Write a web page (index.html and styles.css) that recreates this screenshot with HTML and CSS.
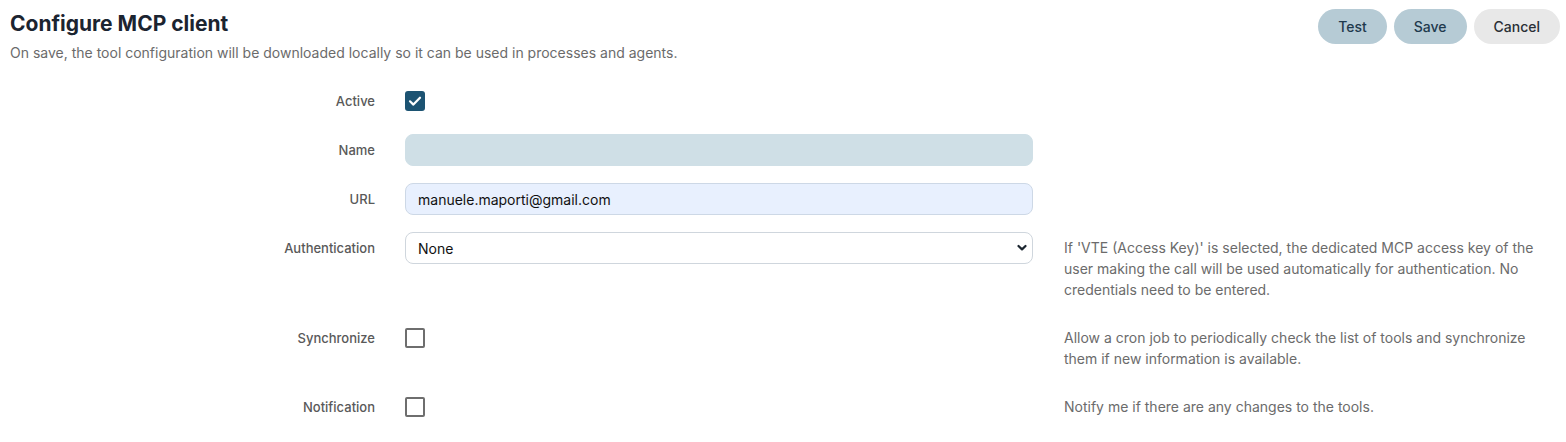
FILE: index.html
```html
<!DOCTYPE html>
<html lang="en">
<head>
<meta charset="utf-8">
<title>Configure MCP client</title>
<link rel="stylesheet" href="styles.css">
</head>
<body>
<header class="page-header">
  <div class="heading">
    <h1 class="title">Configure MCP client</h1>
    <p class="subtitle">On save, the tool configuration will be downloaded locally so it can be used in processes and agents.</p>
  </div>
  <div class="actions">
    <button class="btn btn-primary">Test</button>
    <button class="btn btn-primary">Save</button>
    <button class="btn btn-secondary">Cancel</button>
  </div>
</header>

<form class="form">
  <div class="row">
    <label class="label">Active</label>
    <div class="control">
      <span class="check checked">
        <svg viewBox="0 0 20 20" width="20" height="20"><path d="M5 10.3l3.4 3.3 6.6-6.9" fill="none" stroke="#fff" stroke-width="2.2" stroke-linecap="round" stroke-linejoin="round"/></svg>
      </span>
    </div>
  </div>

  <div class="row">
    <label class="label">Name</label>
    <div class="control">
      <input class="input input-empty" type="text" value="">
    </div>
  </div>

  <div class="row">
    <label class="label">URL</label>
    <div class="control">
      <input class="input input-filled" type="text" value="manuele.maporti@gmail.com">
    </div>
  </div>

  <div class="row">
    <label class="label">Authentication</label>
    <div class="control">
      <div class="select-wrap">
        <select class="select">
          <option>None</option>
        </select>
        <svg class="chevron" viewBox="0 0 10 8" width="10" height="8"><path d="M1.5 2l3.5 3.4 3.5-3.4" fill="none" stroke="#1c2630" stroke-width="2.2" stroke-linecap="round" stroke-linejoin="round"/></svg>
      </div>
    </div>
    <p class="help">If 'VTE (Access Key)' is selected, the dedicated MCP access key of the user making the call will be used automatically for authentication. No credentials need to be entered.</p>
  </div>

  <div class="row">
    <label class="label">Synchronize</label>
    <div class="control">
      <span class="check"></span>
    </div>
    <p class="help">Allow a cron job to periodically check the list of tools and synchronize them if new information is available.</p>
  </div>

  <div class="row">
    <label class="label">Notification</label>
    <div class="control">
      <span class="check"></span>
    </div>
    <p class="help">Notify me if there are any changes to the tools.</p>
  </div>
</form>
</body>
</html>
```

FILE: styles.css
```css
* { box-sizing: border-box; }

html, body {
  margin: 0;
  padding: 0;
  background: #ffffff;
  font-family: Inter, "Noto Sans", "Liberation Sans", sans-serif;
  color: #1b2430;
}

.page-header {
  display: flex;
  justify-content: space-between;
  align-items: flex-start;
  padding: 11px 6px 0 10px;
}

.title {
  margin: 0;
  font-size: 21px;
  line-height: 25px;
  font-weight: 700;
  color: #1b2430;
}

.subtitle {
  margin: 7px 0 0;
  font-size: 14px;
  line-height: 20px;
  color: #6b6b6b;
}

.actions {
  display: flex;
  gap: 7px;
  margin-top: -2px;
}

.btn {
  height: 35px;
  padding: 0 20px;
  border: none;
  border-radius: 18px;
  font-family: inherit;
  font-size: 14px;
  font-weight: 500;
  color: #1f3a4d;
  cursor: pointer;
}

.btn-primary { background: #b6cbd5; }
.btn-secondary { background: #e8e8e8; color: #2a2f35; }

.form {
  display: flex;
  flex-direction: column;
  gap: 17px;
  margin-top: 22px;
}

.row {
  display: flex;
  align-items: flex-start;
}

.label {
  width: 375px;
  flex: none;
  height: 32px;
  line-height: 32px;
  text-align: right;
  font-size: 13px;
  font-weight: 500;
  color: #595959;
}

.control {
  width: 628px;
  flex: none;
  margin-left: 30px;
  min-height: 32px;
  display: flex;
  align-items: center;
}

.check {
  width: 20px;
  height: 20px;
  border: 2px solid #6e6e6e;
  border-radius: 2px;
  display: inline-block;
}

.check.checked {
  border: none;
  background: #1c5372;
  border-radius: 3px;
}

.check svg { display: block; }

.input {
  width: 100%;
  height: 32px;
  border-radius: 8px;
  padding: 0 12px;
  font-family: inherit;
  font-size: 14px;
  color: #111;
  outline: none;
}

.input-empty {
  background: #cfdfe6;
  border: 1px solid #cfdfe6;
}

.input-filled {
  background: #e8f0fe;
  border: 1px solid #cdd8e6;
}

.select-wrap {
  position: relative;
  width: 100%;
}

.select {
  width: 100%;
  height: 32px;
  appearance: none;
  -webkit-appearance: none;
  background: #ffffff;
  border: 1px solid #cfd6dd;
  border-radius: 8px;
  padding: 0 12px;
  font-family: inherit;
  font-size: 14px;
  color: #111;
}

.chevron {
  position: absolute;
  right: 6px;
  top: 12px;
  pointer-events: none;
}

.help {
  margin: 0 0 0 31px;
  width: 480px;
  padding: 5px 0;
  font-size: 14px;
  line-height: 21px;
  color: #6b6b6b;
}
```
